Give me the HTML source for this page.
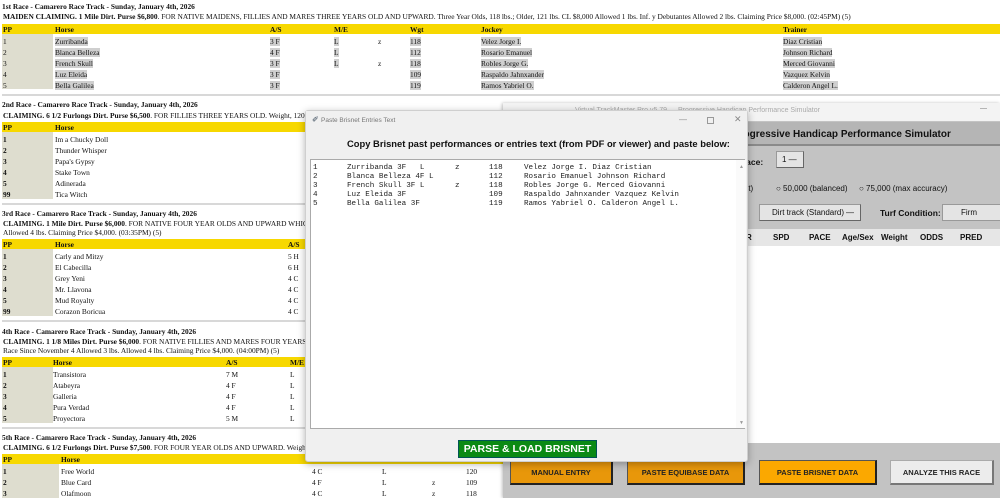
<!DOCTYPE html>
<html><head><meta charset="utf-8">
<style>
*{margin:0;padding:0;box-sizing:border-box}
html,body{width:1000px;height:498px;overflow:hidden;background:#fff}
#w{position:relative;width:1000px;height:498px;overflow:hidden;font-family:"Liberation Serif",serif;font-size:7.4px;color:#111}
.a{position:absolute;white-space:nowrap}
.h{font-weight:bold}
.y{position:absolute;left:2px;right:0;height:10px;background:#f7d800}
.pp{position:absolute;left:2px;width:51px;background:#deddcf}
.sep{position:absolute;left:2px;right:0;height:2px;background:#d8d8d8}
.hl{background:#cfcfcf}
.s{font-family:"Liberation Sans",sans-serif}
.btn{position:absolute;font-family:"Liberation Sans",sans-serif;font-weight:bold;font-size:7.5px;display:flex;align-items:center;justify-content:center;border:1px solid #555;border-right:2px solid #222;border-bottom:2px solid #222}
.m{font-family:"Liberation Mono",monospace;font-size:7.6px;color:#222}
</style></head><body><div id="w">

<!-- Race 1 -->
<div class="a h" style="left:2px;top:2px">1st Race - Camarero Race Track - Sunday, January 4th, 2026</div>
<div class="a" style="left:3px;top:12px"><b>MAIDEN CLAIMING. 1 Mile Dirt. Purse $6,800</b>. FOR NATIVE MAIDENS, FILLIES AND MARES THREE YEARS OLD AND UPWARD. Three Year Olds, 118 lbs.; Older, 121 lbs. CL $8,000 Allowed 1 lbs. Inf. y Debutantes Allowed 2 lbs. Claiming Price $8,000. (02:45PM) (5)</div>
<div class="y" style="top:24px"></div>
<div class="pp" style="top:34px;height:55px"></div>
<div class="a h" style="left:3px;top:25px">PP</div><div class="a h" style="left:55px;top:25px">Horse</div><div class="a h" style="left:270px;top:25px">A/S</div><div class="a h" style="left:334px;top:25px">M/E</div><div class="a h" style="left:410px;top:25px">Wgt</div><div class="a h" style="left:481px;top:25px">Jockey</div><div class="a h" style="left:783px;top:25px">Trainer</div>
<div class="a" style="left:3px;top:36px;line-height:11px">1<br>2<br>3<br>4<br>5</div>
<div class="a" style="left:55px;top:36px;line-height:11px"><span class="hl">Zurribanda</span><br><span class="hl">Blanca Belleza</span><br><span class="hl">French Skull</span><br><span class="hl">Luz Eleida</span><br><span class="hl">Bella Galilea</span></div>
<div class="a" style="left:270px;top:36px;line-height:11px"><span class="hl">3 F</span><br><span class="hl">4 F</span><br><span class="hl">3 F</span><br><span class="hl">3 F</span><br><span class="hl">3 F</span></div>
<div class="a" style="left:334px;top:36px;line-height:11px"><span class="hl">L</span><br><span class="hl">L</span><br><span class="hl">L</span></div>
<div class="a" style="left:378px;top:36px;line-height:11px">z<br>&nbsp;<br>z</div>
<div class="a" style="left:410px;top:36px;line-height:11px"><span class="hl">118</span><br><span class="hl">112</span><br><span class="hl">118</span><br><span class="hl">109</span><br><span class="hl">119</span></div>
<div class="a" style="left:481px;top:36px;line-height:11px"><span class="hl">Velez Jorge I.</span><br><span class="hl">Rosario Emanuel</span><br><span class="hl">Robles Jorge G.</span><br><span class="hl">Raspaldo Jahnxander</span><br><span class="hl">Ramos Yabriel O.</span></div>
<div class="a" style="left:783px;top:36px;line-height:11px"><span class="hl">Diaz Cristian</span><br><span class="hl">Johnson Richard</span><br><span class="hl">Merced Giovanni</span><br><span class="hl">Vazquez Kelvin</span><br><span class="hl">Calderon Angel L.</span></div>
<div class="sep" style="top:94px"></div>

<!-- Race 2 -->
<div class="a h" style="left:2px;top:100px">2nd Race - Camarero Race Track - Sunday, January 4th, 2026</div>
<div class="a" style="left:3px;top:111px"><b>CLAIMING. 6 1/2 Furlongs Dirt. Purse $6,500</b>. FOR FILLIES THREE YEARS OLD. Weight, 120 lbs.</div>
<div class="y" style="top:122px"></div>
<div class="pp" style="top:132px;height:67px"></div>
<div class="a h" style="left:3px;top:123px">PP</div><div class="a h" style="left:55px;top:123px">Horse</div>
<div class="a h" style="left:3px;top:134px;line-height:11px">1<br>2<br>3<br>4<br>5<br>99</div>
<div class="a" style="left:55px;top:134px;line-height:11px">Im a Chucky Doll<br>Thunder Whisper<br>Papa's Gypsy<br>Stake Town<br>Adinerada<br>Tica Witch</div>
<div class="sep" style="top:203px"></div>

<!-- Race 3 -->
<div class="a h" style="left:2px;top:209px">3rd Race - Camarero Race Track - Sunday, January 4th, 2026</div>
<div class="a" style="left:3px;top:219px"><b>CLAIMING. 1 Mile Dirt. Purse $6,000</b>. FOR NATIVE FOUR YEAR OLDS AND UPWARD WHICH HAVE NOT WON</div>
<div class="a" style="left:3px;top:228px">Allowed 4 lbs. Claiming Price $4,000. (03:35PM) (5)</div>
<div class="y" style="top:239px"></div>
<div class="pp" style="top:249px;height:67px"></div>
<div class="a h" style="left:3px;top:240px">PP</div><div class="a h" style="left:55px;top:240px">Horse</div><div class="a h" style="left:288px;top:240px">A/S</div>
<div class="a h" style="left:3px;top:251px;line-height:11px">1<br>2<br>3<br>4<br>5<br>99</div>
<div class="a" style="left:55px;top:251px;line-height:11px">Carly and Mitzy<br>El Cabecilla<br>Grey Yeni<br>Mr. Llavona<br>Mud Royalty<br>Corazon Boricua</div>
<div class="a" style="left:288px;top:251px;line-height:11px">5 H<br>6 H<br>4 C<br>4 C<br>4 C<br>4 C</div>
<div class="sep" style="top:320px"></div>

<!-- Race 4 -->
<div class="a h" style="left:2px;top:327px">4th Race - Camarero Race Track - Sunday, January 4th, 2026</div>
<div class="a" style="left:3px;top:337px"><b>CLAIMING. 1 1/8 Miles Dirt. Purse $6,000</b>. FOR NATIVE FILLIES AND MARES FOUR YEARS OLD AND UPWARD</div>
<div class="a" style="left:3px;top:346px">Race Since November 4 Allowed 3 lbs. Allowed 4 lbs. Claiming Price $4,000. (04:00PM) (5)</div>
<div class="y" style="top:357px"></div>
<div class="pp" style="top:367px;height:56px"></div>
<div class="a h" style="left:3px;top:358px">PP</div><div class="a h" style="left:53px;top:358px">Horse</div><div class="a h" style="left:226px;top:358px">A/S</div><div class="a h" style="left:290px;top:358px">M/E</div>
<div class="a h" style="left:3px;top:369px;line-height:11px">1<br>2<br>3<br>4<br>5</div>
<div class="a" style="left:53px;top:369px;line-height:11px">Transistora<br>Atabeyra<br>Galleria<br>Pura Verdad<br>Proyectora</div>
<div class="a" style="left:226px;top:369px;line-height:11px">7 M<br>4 F<br>4 F<br>4 F<br>5 M</div>
<div class="a" style="left:290px;top:369px;line-height:11px">L<br>L<br>L<br>L<br>L</div>
<div class="sep" style="top:427px"></div>

<!-- Race 5 -->
<div class="a h" style="left:2px;top:433px">5th Race - Camarero Race Track - Sunday, January 4th, 2026</div>
<div class="a" style="left:3px;top:443px"><b>CLAIMING. 6 1/2 Furlongs Dirt. Purse $7,500</b>. FOR FOUR YEAR OLDS AND UPWARD. Weight, 122 lbs.</div>
<div class="y" style="top:454px"></div>
<div class="pp" style="top:464px;height:34px;width:57px"></div>
<div class="a h" style="left:3px;top:455px">PP</div><div class="a h" style="left:61px;top:455px">Horse</div>
<div class="a h" style="left:3px;top:466px;line-height:11px">1<br>2<br>3</div>
<div class="a" style="left:61px;top:466px;line-height:11px">Free World<br>Blue Card<br>Olafmoon</div>
<div class="a" style="left:312px;top:466px;line-height:11px">4 C<br>4 F<br>4 C</div>
<div class="a" style="left:382px;top:466px;line-height:11px">L<br>L<br>L</div>
<div class="a" style="left:432px;top:466px;line-height:11px">&nbsp;<br>z<br>z</div>
<div class="a" style="left:466px;top:466px;line-height:11px">120<br>109<br>118</div>

<!-- Background app window -->
<div class="a s" style="left:503px;top:103px;width:497px;height:395px;background:#c3c3c3;box-shadow:-1px 0 3px rgba(0,0,0,.25);overflow:hidden">
  <div class="a" style="left:0;top:0;width:497px;height:18px;background:#f3f3f3;color:#aaa;font-size:7px;padding:4px 0 0 72px">Virtual TrackMaster Pro v5.79 — Progressive Handicap Performance Simulator<span style="position:absolute;left:477px;top:2px;color:#777">—</span></div>
  <div class="a" style="left:0;top:19px;width:497px;height:24px;background:#b5b5b5;border-bottom:2px solid #8a8a8a"></div>
  <div class="a" style="left:230px;top:26px;font-weight:bold;font-size:10px;color:#111">Progressive Handicap Performance Simulator</div>
  <div class="a" style="left:237px;top:54px;font-weight:bold;font-size:8.5px">Race:</div>
  <div class="a" style="left:273px;top:48px;width:28px;height:17px;background:#e4e4e4;border:1px solid #999;border-right-color:#666;border-bottom-color:#666;font-size:8px;padding:3px 0 0 5px">1 —</div>
  <div class="a" style="left:232px;top:81px;font-size:8px">(fast)</div>
  <div class="a" style="left:273px;top:81px;font-size:8px">○ 50,000 (balanced)</div>
  <div class="a" style="left:356px;top:81px;font-size:8px">○ 75,000 (max accuracy)</div>
  <div class="a" style="left:256px;top:101px;width:102px;height:17px;background:#e4e4e4;border:1px solid #999;border-right-color:#666;border-bottom-color:#666;font-size:8px;padding:3px 0 0 12px">Dirt track (Standard)<span style="position:absolute;right:6px">—</span></div>
  <div class="a" style="left:377px;top:105px;font-weight:bold;font-size:8.5px">Turf Condition:</div>
  <div class="a" style="left:439px;top:101px;width:60px;height:17px;background:#e4e4e4;border:1px solid #999;font-size:8px;padding:3px 0 0 18px">Firm</div>
  <div class="a" style="left:0;top:126px;width:497px;height:17px;background:#e6e6e6"></div>
  <div class="a" style="left:0;top:143px;width:497px;height:197px;background:#fff"></div>
  <div class="a" style="left:243px;top:130px;font-weight:bold;font-size:8px">R</div>
  <div class="a" style="left:270px;top:130px;font-weight:bold;font-size:8px">SPD</div>
  <div class="a" style="left:306px;top:130px;font-weight:bold;font-size:8px">PACE</div>
  <div class="a" style="left:339px;top:130px;font-weight:bold;font-size:8px">Age/Sex</div>
  <div class="a" style="left:378px;top:130px;font-weight:bold;font-size:8px">Weight</div>
  <div class="a" style="left:417px;top:130px;font-weight:bold;font-size:8px">ODDS</div>
  <div class="a" style="left:457px;top:130px;font-weight:bold;font-size:8px">PRED</div>
</div>
<div class="btn" style="left:510px;top:460px;width:103px;height:25px;background:#e8970a;color:#222">MANUAL ENTRY</div>
<div class="btn" style="left:627px;top:460px;width:118px;height:25px;background:#e8970a;color:#222">PASTE EQUIBASE DATA</div>
<div class="btn" style="left:759px;top:460px;width:118px;height:25px;background:#fba800;color:#222">PASTE BRISNET DATA</div>
<div class="btn" style="left:890px;top:460px;width:104px;height:25px;background:#ececec;color:#222;border-color:#aaa #777 #777 #aaa">ANALYZE THIS RACE</div>

<!-- Dialog -->
<div class="a s" style="left:305px;top:110px;width:443px;height:352px;background:#f0f0f0;border:1px solid #cfcfcf;box-shadow:0 2px 8px rgba(0,0,0,.3);border-radius:3px">
  <div class="a" style="left:0;top:0;width:441px;height:20px;background:#f0f0f0;font-size:6.5px;color:#777;padding:6px 0 0 15px">Paste Brisnet Entries Text
    <span style="position:absolute;left:6px;top:4px;color:#345;font-size:8px">✐</span>
    <span style="position:absolute;left:373px;top:4px;font-size:8px;color:#888">—</span>
    <span style="position:absolute;left:401px;top:6px;width:7px;height:7px;border:1px solid #999"></span>
    <span style="position:absolute;left:428px;top:3px;font-size:9px;color:#888">✕</span>
  </div>
  <div class="a" style="left:41px;top:27px;font-weight:bold;font-size:9.4px;color:#111">Copy Brisnet past performances or entries text (from PDF or viewer) and paste below:</div>
  <div class="a" style="left:4px;top:48px;width:435px;height:270px;background:#fff;border:1px solid #aaa">
    <div class="a" style="left:425px;top:0;width:10px;height:268px;background:#fafafa"></div>
    <div class="a" style="left:428px;top:4px;font-size:5px;color:#999">▲</div>
    <div class="a" style="left:428px;top:260px;font-size:5px;color:#999">▼</div>
    <div class="a m" style="left:2px;top:4px;line-height:9px">1<br>2<br>3<br>4<br>5</div>
    <div class="a m" style="left:36px;top:4px;line-height:9px">Zurribanda 3F &nbsp;&nbsp;L<br>Blanca Belleza 4F L<br>French Skull 3F L<br>Luz Eleida 3F<br>Bella Galilea 3F</div>
    <div class="a m" style="left:144px;top:4px;line-height:9px">z<br>&nbsp;<br>z</div>
    <div class="a m" style="left:178px;top:4px;line-height:9px">118<br>112<br>118<br>109<br>119</div>
    <div class="a m" style="left:213px;top:4px;line-height:9px">Velez Jorge I. Diaz Cristian<br>Rosario Emanuel Johnson Richard<br>Robles Jorge G. Merced Giovanni<br>Raspaldo Jahnxander Vazquez Kelvin<br>Ramos Yabriel O. Calderon Angel L.</div>
  </div>
  <div class="a" style="left:152px;top:329px;width:139px;height:18px;background:#0b8a14;border:1px solid #055;color:#fff;font-weight:bold;font-size:10.5px;text-align:center;line-height:16px">PARSE &amp; LOAD BRISNET</div>
</div>
</div></body></html>
